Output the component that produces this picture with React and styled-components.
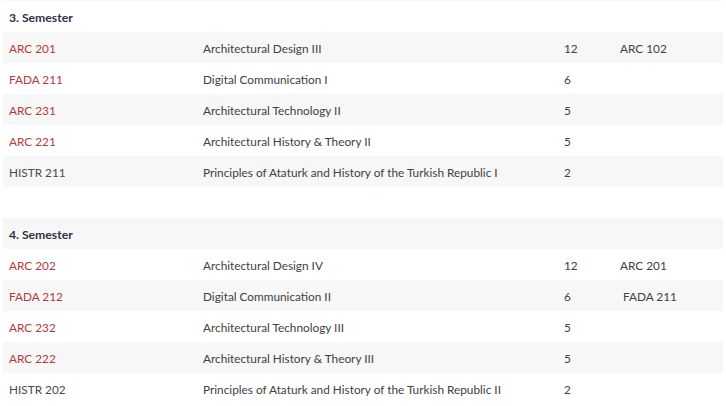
import styled, { createGlobalStyle } from "styled-components";

const GlobalStyle = createGlobalStyle`
  body {
    margin: 0;
    background: #ffffff;
    font-family: "Lato", "Liberation Sans", sans-serif;
  }
`;

const Page = styled.div`
  padding: 0 3px;
`;

const EdgeStripe = styled.div`
  height: 1px;
  background: #f6f6f6;
`;

const Row = styled.div`
  display: grid;
  grid-template-columns: 194px 361px 56px 1fr;
  align-items: center;
  height: 31px;
  padding-top: 1px;
  box-sizing: border-box;
  background: ${props => (props.$striped ? "#f7f7f7" : "#ffffff")};
`;

const Cell = styled.div`
  padding-left: 6px;
  font-size: 11.8px;
  color: #414141;
  white-space: nowrap;
`;

const Code = styled(Cell)`
  color: ${props => (props.$linked ? "#b33a3a" : "#4a4a4a")};
`;

const Heading = styled(Cell)`
  grid-column: 1 / -1;
  font-weight: 700;
  font-size: 12.2px;
  color: #2f3242;
`;

const semesters = [
  {
    title: "3. Semester",
    courses: [
      ["ARC 201", "Architectural Design III", "12", "ARC 102", true],
      ["FADA 211", "Digital Communication I", "6", "", true],
      ["ARC 231", "Architectural Technology II", "5", "", true],
      ["ARC 221", "Architectural History & Theory II", "5", "", true],
      ["HISTR 211", "Principles of Ataturk and History of the Turkish Republic I", "2", "", false],
    ],
  },
  {
    title: "4. Semester",
    courses: [
      ["ARC 202", "Architectural Design IV", "12", "ARC 201", true],
      ["FADA 212", "Digital Communication II", "6", "\u00a0FADA 211", true],
      ["ARC 232", "Architectural Technology III", "5", "", true],
      ["ARC 222", "Architectural History & Theory III", "5", "", true],
      ["HISTR 202", "Principles of Ataturk and History of the Turkish Republic II", "2", "", false],
    ],
  },
];

export default function App() {
  const rows = [];
  semesters.forEach((sem, si) => {
    if (si > 0) rows.push({ type: "gap" });
    rows.push({ type: "title", title: sem.title });
    sem.courses.forEach(c => rows.push({ type: "course", c }));
  });

  return (
    <Page>
      <GlobalStyle />
      <EdgeStripe />
      {rows.map((r, i) => {
        const striped = i % 2 === 1;
        if (r.type === "gap") return <Row key={i} $striped={striped} />;
        if (r.type === "title")
          return (
            <Row key={i} $striped={striped}>
              <Heading>{r.title}</Heading>
            </Row>
          );
        const [code, name, credits, prereq, linked] = r.c;
        return (
          <Row key={i} $striped={striped}>
            <Code $linked={linked}>{code}</Code>
            <Cell>{name}</Cell>
            <Cell>{credits}</Cell>
            <Cell>{prereq}</Cell>
          </Row>
        );
      })}
    </Page>
  );
}
